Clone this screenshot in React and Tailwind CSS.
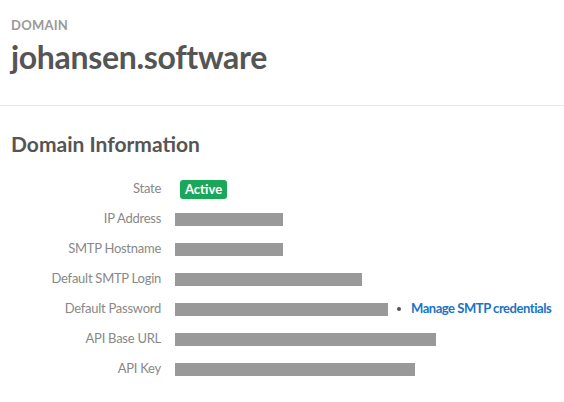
const rows = [
  { label: "IP Address", width: 108 },
  { label: "SMTP Hostname", width: 108 },
  { label: "Default SMTP Login", width: 187 },
  { label: "Default Password", width: 213, link: "Manage SMTP credentials" },
  { label: "API Base URL", width: 261 },
  { label: "API Key", width: 240 },
];

function Redacted({ width }) {
  return <div className="h-[13px] shrink-0 bg-[#999999]" style={{ width }} />;
}

export default function App() {
  return (
    <div className="min-h-screen bg-white font-['Lato',sans-serif] text-[#555]">
      <header className="px-[11px] pt-[18px] pb-[28px] border-b border-[#e6e6e6]">
        <p className="text-[13px] leading-[14px] font-bold text-[#999] tracking-[0.02em]">DOMAIN</p>
        <h1 className="mt-[4px] text-[32px] leading-[41px] font-bold tracking-[-0.01em] text-[#555]">johansen.software</h1>
      </header>

      <section className="px-[11px] pt-[24px]">
        <h2 className="text-[21px] leading-[28px] font-bold text-[#555]">Domain Information</h2>

        <div className="mt-[16px] grid grid-cols-[150px_1fr] gap-x-[14px] text-[13px] tracking-[-0.02em] text-[#888]">
          <div className="h-[30px] flex items-center justify-end">State</div>
          <div className="h-[30px] flex items-center">
            <span className="ml-[5px] rounded-[3px] bg-[#1aa75a] px-[5px] py-[1px] text-[13px] leading-[17px] font-bold tracking-normal text-white">
              Active
            </span>
          </div>

          {rows.map((row) => (
            <div key={row.label} className="contents">
              <div className="h-[30px] flex items-center justify-end whitespace-nowrap">{row.label}</div>
              <div className="h-[30px] flex items-center">
                <Redacted width={row.width} />
                {row.link && (
                  <div className="ml-[9px] flex items-center gap-[10px] whitespace-nowrap">
                    <span className="h-[4px] w-[4px] rounded-full bg-[#555]" />
                    <a href="#" className="text-[13px] tracking-[-0.035em] text-[#1a73c8] font-bold">
                      {row.link}
                    </a>
                  </div>
                )}
              </div>
            </div>
          ))}
        </div>
      </section>
    </div>
  );
}
